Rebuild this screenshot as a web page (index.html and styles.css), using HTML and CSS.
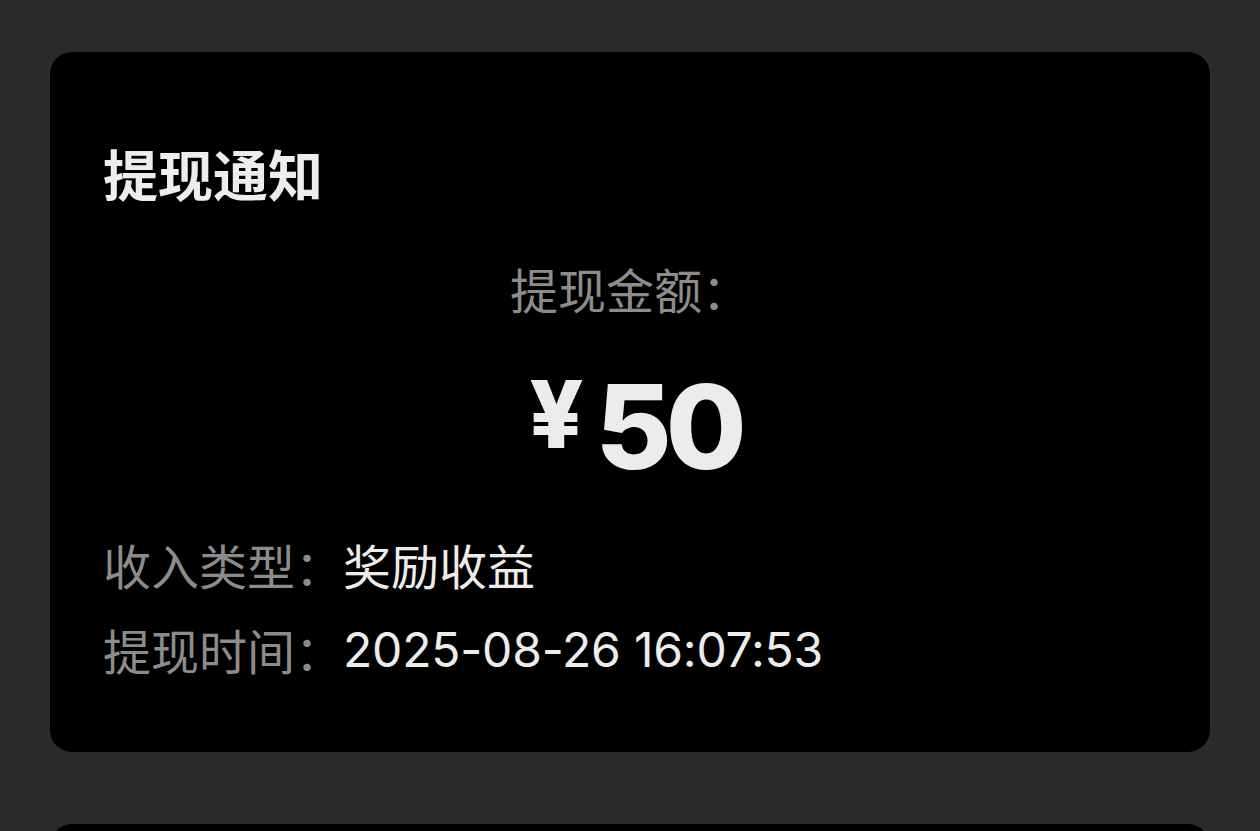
FILE: index.html
```html
<!DOCTYPE html>
<html lang="zh-CN">
<head>
<meta charset="utf-8">
<link rel="stylesheet" href="styles.css">
</head>
<body>
<div class="page">
  <section class="card">
    <h1 class="title">提现通知</h1>
    <div class="amount-label">提现金额：</div>
    <div class="amount"><span class="currency">¥</span><span class="value">50</span></div>
    <div class="rows">
      <div class="row"><span class="key">收入类型：</span><span class="val val-cjk">奖励收益</span></div>
      <div class="row"><span class="key">提现时间：</span><span class="val">2025-08-26 16:07:53</span></div>
    </div>
  </section>
  <section class="card card-next"></section>
</div>
</body>
</html>
```
FILE: styles.css
```css
html, body {
  margin: 0;
  padding: 0;
  background: #2b2b2b;
  height: 100%;
  overflow: hidden;
}
body {
  font-family: Inter, "Noto Sans CJK SC", sans-serif;
  color: #ececec;
}
.page {
  padding: 52px 50px 0;
  display: flex;
  flex-direction: column;
  gap: 72px;
}
.card {
  background: #000;
  border-radius: 22px;
  padding: 82px 53px 60px;
  display: flex;
  flex-direction: column;
}
.card-next {
  height: 300px;
  padding: 0;
}
.title {
  margin: 0;
  font-family: "Noto Sans CJK SC", sans-serif;
  font-size: 55px;
  line-height: 76px;
  font-weight: 700;
  color: #ededed;
}
.amount-label {
  margin-top: 46px;
  text-align: center;
  font-family: "Noto Sans CJK SC", sans-serif;
  font-size: 48px;
  line-height: 64px;
  color: #8c8c8c;
}
.amount {
  margin-top: 29px;
  height: 130px;
  line-height: 130px;
  text-align: center;
  white-space: nowrap;
  color: #ececec;
  font-weight: 800;
  padding-left: 10px;
}
.currency {
  font-size: 94px;
  vertical-align: 21px;
  margin-right: 12px;
}
.value {
  font-size: 117px;
  letter-spacing: -6px;
}
.rows {
  margin-top: 43px;
  display: flex;
  flex-direction: column;
}
.row {
  height: 85px;
  display: flex;
  align-items: center;
  font-size: 48px;
  line-height: 1.2;
  white-space: nowrap;
}
.key {
  font-family: "Noto Sans CJK SC", sans-serif;
  color: #8c8c8c;
}
.val {
  color: #ececec;
  letter-spacing: -0.2px;
}
.val-cjk {
  font-family: "Noto Sans CJK SC", sans-serif;
  letter-spacing: 0;
}
```
